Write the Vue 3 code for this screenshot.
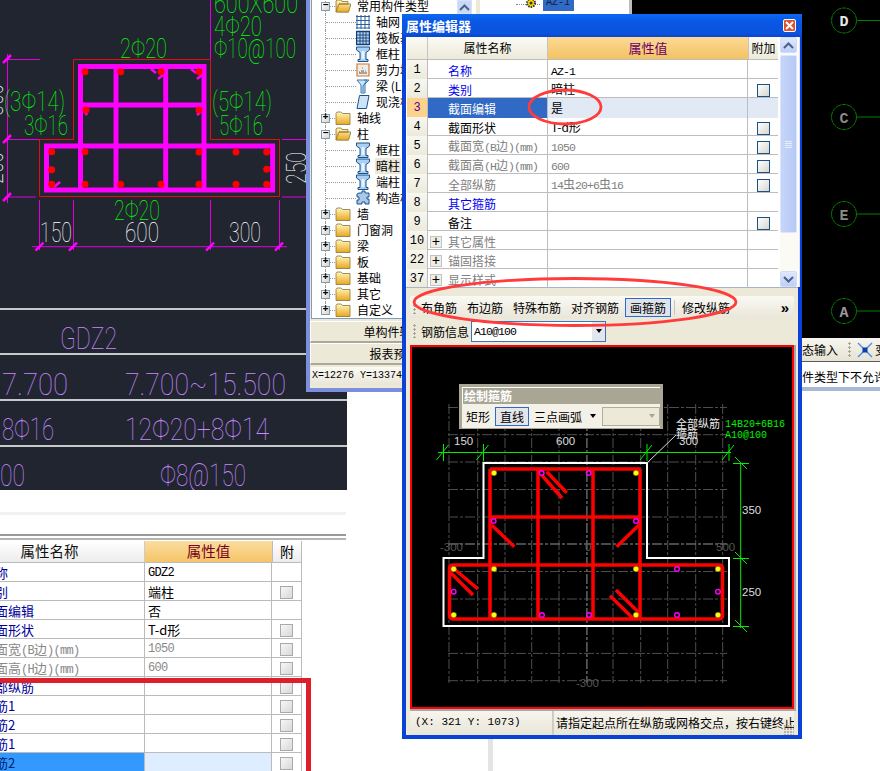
<script setup>
const leftTexts = [
  { t: '600X600', x: 214, y: 13, w: 84, c: 'g' },
  { t: '4Φ20', x: 214, y: 36, w: 48, c: 'g' },
  { t: 'Φ10@100', x: 214, y: 58, w: 82, c: 'g' },
  { t: '2Φ20', x: 120, y: 58, w: 47, c: 'g' },
  { t: '(3Φ14)', x: 4, y: 111, w: 61, c: 'g' },
  { t: '3Φ16', x: 24, y: 135, w: 44, c: 'g' },
  { t: '(5Φ14)', x: 212, y: 111, w: 60, c: 'g' },
  { t: '5Φ16', x: 219, y: 135, w: 44, c: 'g' },
  { t: '2Φ20', x: 114, y: 220, w: 46, c: 'g' },
  { t: '150', x: 40, y: 242, w: 32, c: 'w' },
  { t: '600', x: 125, y: 242, w: 34, c: 'w' },
  { t: '300', x: 229, y: 242, w: 32, c: 'w' },
  { t: 'GDZ2', x: 60, y: 349, w: 57, c: 'p' },
  { t: '7.700', x: 2, y: 395, w: 66, c: 'p' },
  { t: '7.700~15.500', x: 125, y: 395, w: 161, c: 'p' },
  { t: '8Φ16', x: 2, y: 440, w: 52, c: 'p' },
  { t: '12Φ20+8Φ14', x: 125, y: 440, w: 144, c: 'p' },
  { t: '00', x: 0, y: 486, w: 25, c: 'p' },
  { t: 'Φ8@150', x: 160, y: 486, w: 86, c: 'p' }
]
const stirrups = [
  [78, 66.5, 206, 66.5], [80.5, 64, 80.5, 192], [116, 66, 116, 190], [165.7, 66, 165.7, 190], [204, 64, 204, 192],
  [80, 105, 204, 105], [44, 146, 275, 146], [44, 190, 275, 190], [46.5, 144, 46.5, 192], [272.6, 144, 272.6, 192]
]
const leftDots = [
  [85, 71.7], [120.6, 71.7], [161, 71.7], [199, 71.7], [86, 110], [199, 110],
  [51.7, 151.7], [85, 151.7], [199, 152], [236, 152], [266.7, 152], [51.7, 169.7], [266.7, 169.3],
  [51.7, 184.3], [85, 184.3], [120.6, 184.3], [161, 184.3], [199, 184.3], [236, 184.3], [266.7, 184.3]
]
const leftHooks = [
  [151, 69, 156, 73], [158, 79, 164, 74], [191, 69, 196, 73], [197, 79, 203, 74],
  [83, 109, 87, 115], [197, 115, 203, 110], [54, 187, 60, 182]
]
const leftSlashes = [
  [7, 59], [7, 139], [7, 197], [39.5, 246.7], [73, 246.7], [210, 246.7], [279, 246.7]
]
const axes = [
  { k: 'D', y: 20.5, c: '#e8e8e8' }, { k: 'C', y: 117, c: '#8a8a8a' },
  { k: 'E', y: 214, c: '#8a8a8a' }, { k: 'A', y: 311, c: '#9a9a9a' }
]
const treeRows = [
  { t: '常用构件类型', kind: 'open' },
  { t: '轴网', kind: 'leaf', i: 'grid' },
  { t: '筏板基础', kind: 'leaf', i: 'raft' },
  { t: '框柱', kind: 'leaf', i: 'col' },
  { t: '剪力墙', kind: 'leaf', i: 'wall' },
  { t: '梁 (L)', kind: 'leaf', i: 'beam' },
  { t: '现浇板', kind: 'leaf', i: 'slab' },
  { t: '轴线', kind: 'closed' },
  { t: '柱', kind: 'open' },
  { t: '框柱', kind: 'leaf', i: 'col' },
  { t: '暗柱', kind: 'leaf', i: 'col', sel: true },
  { t: '端柱', kind: 'leaf', i: 'col' },
  { t: '构造柱', kind: 'leaf', i: 'gear' },
  { t: '墙', kind: 'closed' },
  { t: '门窗洞', kind: 'closed' },
  { t: '梁', kind: 'closed' },
  { t: '板', kind: 'closed' },
  { t: '基础', kind: 'closed' },
  { t: '其它', kind: 'closed' },
  { t: '自定义', kind: 'closed' }
]
const propRows = [
  { n: '1', name: '名称', tone: 'link', val: 'AZ-1', latin: true },
  { n: '2', name: '类别', tone: 'link', val: '暗柱', check: true },
  { n: '3', name: '截面编辑', tone: 'sel', val: '是', sel: true },
  { n: '4', name: '截面形状', val: 'T-d形', check: true },
  { n: '5', name: '截面宽', suffix: '(B', cjk: '边', tail: ')(mm)', tone: 'dim', val: '1050', latin: true, dim: true, check: true },
  { n: '6', name: '截面高', suffix: '(H', cjk: '边', tail: ')(mm)', tone: 'dim', val: '600', latin: true, dim: true, check: true },
  { n: '7', name: '全部纵筋', tone: 'dim', rebar: true, dim: true, check: true },
  { n: '8', name: '其它箍筋', tone: 'link', val: '' },
  { n: '9', name: '备注', val: '', check: true },
  { n: '10', name: '其它属性', tone: 'dim', val: '', plus: true },
  { n: '22', name: '锚固搭接', tone: 'dim', val: '', plus: true },
  { n: '37', name: '显示样式', tone: 'dim', val: '', plus: true }
]
const xGrid = [449, 477.7, 505, 531.7, 559, 586.7, 613, 640.7, 667.7, 695.7, 722.7]
const yGrid = [407.5, 434.7, 462, 489.5, 517, 544, 571.5, 599, 626, 653.4, 680.7]
const hookLines = [
  [541.7, 475, 562, 498], [546.7, 471.7, 566.7, 492.7], [491.7, 525, 514.3, 546.7], [640, 524, 616.7, 546.7],
  [453, 568, 478, 589], [450.7, 572.7, 473, 595], [616, 590, 639, 612.7], [610, 595.7, 632.7, 618]
]
const yellowDots = [
  [494, 473], [636, 473], [453.7, 569], [494, 569], [636, 569], [718, 569],
  [453.7, 615], [494, 615], [636, 615], [718, 615]
]
const magentaDots = [
  [541.7, 473], [588.7, 473], [493.7, 521], [636, 521], [677, 569], [453.7, 591.7], [718, 591.7],
  [542, 615], [589, 615], [677, 615]
]
const dimX = [443.5, 483.5, 647, 729]
const dimY = [463, 558, 626]
const gridLabels = [
  { t: '-300', x: 440, y: 551 }, { t: '0', x: 585, y: 551 }, { t: '500', x: 716, y: 551 }, { t: '-300', x: 576, y: 687 }
]
const dimLabels = [
  { t: '150', x: 454, y: 445 }, { t: '600', x: 556, y: 445 }, { t: '300', x: 679, y: 445 },
  { t: '350', x: 742, y: 514 }, { t: '250', x: 742, y: 596 }
]
const sideRows = [
  { name: '名称', val: 'GDZ2', latin: true },
  { name: '类别', val: '端柱', check: true },
  { name: '截面编辑', val: '否' },
  { name: '截面形状', val: 'T-d形', check: true },
  { name: '截面宽', suffix: '(B', cjk: '边', tail: ')(mm)', val: '1050', latin: true, dim: true, check: true },
  { name: '截面高', suffix: '(H', cjk: '边', tail: ')(mm)', val: '600', latin: true, dim: true, check: true },
  { name: '全部纵筋', val: '', check: true },
  { name: '角筋1', val: '', check: true },
  { name: '角筋2', val: '', check: true },
  { name: '边筋1', val: '', check: true },
  { name: '边筋2', val: '', check: true, sel: true }
]
</script>

<template>
  <div class="screen">
    <svg class="defs" width="0" height="0" aria-hidden="true">
      <defs>
        <linearGradient id="fold" x1="0" y1="0" x2="0" y2="1">
          <stop offset="0" stop-color="#fff6c4" />
          <stop offset="1" stop-color="#e7a81c" />
        </linearGradient>
        <symbol id="i-closed" viewBox="0 0 16 14">
          <path d="M1 2.500 2 1h4l1.500 1.500H15v11H1z" fill="url(#fold)" stroke="#8a7436" stroke-width=".8" />
        </symbol>
        <symbol id="i-open" viewBox="0 0 16 14">
          <path d="M1 13V2l1-1h4l1 1.500h6V5H4L1 13l3 .2h9.500L16 5H4" fill="url(#fold)" stroke="#8a7436" stroke-width=".8" />
        </symbol>
        <symbol id="i-col" viewBox="0 0 14 16">
          <path d="M.5 1h13v3l-3.500 2.500v7h2v2H2v-2h2v-7L.5 4z" fill="#a9d0f2" stroke="#19548f" />
          <path d="M5.500 5h3v8h-3z" fill="#e8f3fc" />
        </symbol>
        <symbol id="i-grid" viewBox="0 0 14 16">
          <path d="M1 1v14M5 1v14M9 1v14M13 1v14M0 2.500h14M0 6.500h14M0 10.500h14M0 14h14" fill="none" stroke="#2c5f9f" />
        </symbol>
        <symbol id="i-raft" viewBox="0 0 14 16">
          <path d="M.5 1.500h13v13H.5z" fill="#b8d3ef" stroke="#123f78" stroke-width="1.400" />
          <path d="M4 1v14M7 1v14M10 1v14M1 5h12M1 8h12M1 11h12" stroke="#123f78" stroke-width=".9" />
        </symbol>
        <symbol id="i-wall" viewBox="0 0 14 16">
          <path d="M1 2h12v12H1z" fill="#f1ece4" stroke="#d07a3c" stroke-width="1.200" />
          <path d="M3 12h8v-2H8V8H5v2H3z" fill="#a9a39a" />
          <path d="M3 10h1M6 6h1M9 9h1" stroke="#777" />
        </symbol>
        <symbol id="i-beam" viewBox="0 0 14 16">
          <path d="M1 2h12L9 6v9H5V7z" fill="#cfe4f7" stroke="#3a78b4" />
          <path d="M8 2l3 0-4 6v6" fill="none" stroke="#3a78b4" />
        </symbol>
        <symbol id="i-slab" viewBox="0 0 14 16">
          <path d="M3.500 1.500H13L10.500 14.500H1z" fill="#cfe3f7" stroke="#19548f" />
        </symbol>
        <symbol id="i-gear" viewBox="0 0 14 16">
          <path d="M3 3h3V1h3v2h4v4h-2v2h2v5H9v-2H6v2H1v-4h2V7H1V4z" fill="#a9c8e8" stroke="#19548f" />
        </symbol>
      </defs>
    </svg>

    <svg class="cad-left" width="347" height="490" viewBox="0 0 347 490">
      <rect width="347" height="490" fill="#20252f" />
      <g stroke="#fff" stroke-width="1.500">
        <line x1="0" y1="309" x2="347" y2="309" />
        <line x1="0" y1="354" x2="347" y2="354" />
        <line x1="0" y1="400" x2="347" y2="400" />
        <line x1="0" y1="446" x2="347" y2="446" />
      </g>
      <g stroke="#e000e0" fill="none">
        <path d="M210.500 0V59M7.500 54V203M7 59.500H40M5 139.500H73M5 197H36M282 139.500H306M282 197H306" />
        <path d="M32 246.700H287M39.500 200V250M73.500 200V250M210.500 200V250M279.500 200V250" />
      </g>
      <path d="M73.500 59.500H210.500V139.500H279.500V196.500H39.500V139.500H73.500Z" fill="none" stroke="#e01010" />
      <g stroke="#ff00ff" stroke-width="5">
        <line v-for="(s, i) in stirrups" :key="i" :x1="s[0]" :y1="s[1]" :x2="s[2]" :y2="s[3]" />
      </g>
      <g stroke="#ff00ff" stroke-width="2.500">
        <line v-for="(s, i) in leftHooks" :key="i" :x1="s[0]" :y1="s[1]" :x2="s[2]" :y2="s[3]" />
        <line v-for="(s, i) in leftSlashes" :key="'s' + i" :x1="s[0] - 4" :y1="s[1] + 4" :x2="s[0] + 4" :y2="s[1] - 4" />
      </g>
      <circle v-for="(d, i) in leftDots" :key="i" :cx="d[0]" :cy="d[1]" r="3.500" fill="#ff0000" />
      <g class="cad-text">
        <text
          v-for="(l, i) in leftTexts"
          :key="i"
          :class="l.c === 'p' ? 'purple' : l.c === 'w' ? 'white' : 'green'"
          :x="l.x"
          :y="l.y"
          :textLength="l.w"
          lengthAdjust="spacingAndGlyphs"
        >{{ l.t }}</text>
        <text class="white" transform="translate(306 184) rotate(-90)" textLength="32" lengthAdjust="spacingAndGlyphs">250</text>
        <text class="white" transform="translate(3 184) rotate(-90)" textLength="32" lengthAdjust="spacingAndGlyphs">250</text>
        <text class="white" transform="translate(3 116) rotate(-90)" textLength="32" lengthAdjust="spacingAndGlyphs">350</text>
      </g>
    </svg>

    <section class="side-props">
      <div class="side-band"></div>
      <div class="side-rule"></div>
      <div class="side-grid side-head">
        <div class="sh-name">属性名称</div>
        <div class="sh-val">属性值</div>
        <div class="sh-att">附</div>
      </div>
      <div v-for="(r, i) in sideRows" :key="i" class="side-grid side-row">
        <div class="s-name" :class="{ 's-sel': r.sel, 's-dim': r.dim }">
          <span class="s-name-in">{{ r.name }}<template v-if="r.suffix"><span class="latin-s">{{ r.suffix }}</span>{{ r.cjk }}<span class="latin-s">{{ r.tail }}</span></template></span>
        </div>
        <div class="s-val" :class="{ 's-val-sel': r.sel, 's-dim': r.dim, 'latin-s': r.latin }">{{ r.val }}</div>
        <div class="s-att"><span v-if="r.check" class="s-check"></span></div>
      </div>
    </section>
    <div class="side-mark"></div>
    <div class="bottom-scrap"></div>

    <section class="az-panel">
      <span class="az-branch"></span>
      <svg class="az-gear" width="12" height="12" viewBox="0 0 12 12">
        <circle cx="6" cy="6" r="4" fill="#ffd800" stroke="#333" stroke-dasharray="1.500 1" stroke-width="2" />
        <circle cx="6" cy="6" r="1.500" fill="#333" />
      </svg>
      <span class="az-label">AZ-1</span>
    </section>

    <svg class="cad-right" width="248" height="338" viewBox="632 0 248 338">
      <rect x="632" width="248" height="338" fill="#000" />
      <g v-for="a in axes" :key="a.k">
        <circle cx="844" :cy="a.y" r="12.500" fill="none" stroke="#008000" stroke-dasharray="5 .6" />
        <line x1="857" :y1="a.y" x2="880" :y2="a.y" stroke="#008000" />
        <text class="axis-letter" x="844" :y="a.y + 5.500" :fill="a.c">{{ a.k }}</text>
      </g>
    </svg>
    <div class="right-bar">
      <span class="rb-text">态输入</span>
      <span class="grip"></span>
      <svg width="16" height="16" viewBox="0 0 16 16">
        <path d="M1 1 15 15M15 1 1 15" stroke="#3b8fe0" fill="none" stroke-width="1.300" />
        <rect x="5.500" y="5.500" width="5" height="5" fill="#0a3fa8" />
      </svg>
      <span class="rb-text">变</span>
    </div>
    <div class="right-msg">件类型下不允许</div>

    <section class="tree-window">
      <div class="tree">
        <div class="tree-list">
          <div v-for="(r, i) in treeRows" :key="i" class="tree-row" :class="'k-' + r.kind">
            <span class="vline" :class="{ 'v-half': i === treeRows.length - 1 }"></span>
            <template v-if="r.kind !== 'leaf'">
              <span class="expander">{{ r.kind === 'open' ? '−' : '+' }}</span>
              <span class="hdots short"></span>
              <svg class="folder" width="16" height="14"><use :href="r.kind === 'open' ? '#i-open' : '#i-closed'" /></svg>
            </template>
            <template v-else>
              <span class="hdots long"></span>
              <svg class="leaf" width="14" height="16"><use :href="'#i-' + r.i" /></svg>
            </template>
            <span class="tree-text" :class="{ 'tree-sel': r.sel }">{{ r.t }}</span>
          </div>
        </div>
        <div class="tree-scroll-up"><svg width="11" height="7" viewBox="0 0 11 7"><path d="M1 6 5.500 1.500 10 6" fill="none" stroke="#4d6185" stroke-width="2" /></svg></div>
      </div>
      <button class="tree-btn">单构件输入</button>
      <button class="tree-btn">报表预览</button>
      <div class="tree-status">X=12276 Y=13374</div>
    </section>

    <section class="dialog">
      <header class="dlg-title">
        <span>属性编辑器</span>
        <span class="dlg-close"><svg width="9" height="9" viewBox="0 0 9 9"><path d="M1 1 8 8M8 1 1 8" stroke="#fff" stroke-width="2" /></svg></span>
      </header>
      <div class="dlg-top">
        <div class="prop-table">
          <div class="p-row p-head">
            <div class="ph-blank"></div>
            <div class="ph-name">属性名称</div>
            <div class="ph-val">属性值</div>
            <div class="ph-att">附加</div>
          </div>
          <div v-for="r in propRows" :key="r.n" class="p-row">
            <div class="p-num" :class="{ 'num-sel': r.sel }">{{ r.n }}</div>
            <div class="p-name" :class="'tone-' + (r.tone || 'plain')">
              <span v-if="r.plus" class="plus-box">+</span>
              <span class="name-text">{{ r.name }}<template v-if="r.suffix"><span class="latin">{{ r.suffix }}</span>{{ r.cjk }}<span class="latin">{{ r.tail }}</span></template></span>
            </div>
            <div class="p-val" :class="{ 'val-sel': r.sel, 'val-dim': r.dim }">
              <template v-if="r.rebar"><span class="latin">14</span>虫<span class="latin">20+6</span>虫<span class="latin">16</span></template>
              <span v-else :class="{ latin: r.latin }">{{ r.val }}</span>
            </div>
            <div class="p-att" :class="{ 'val-sel': r.sel }"><span v-if="r.check" class="check"></span></div>
          </div>
        </div>
        <div class="scrollbar">
          <div class="sb-btn"><svg width="11" height="7" viewBox="0 0 11 7"><path d="M1 6 5.500 1.500 10 6" fill="none" stroke="#4d6185" stroke-width="2" /></svg></div>
          <div class="sb-thumb"><span></span><span></span><span></span><span></span></div>
          <div class="sb-track"></div>
          <div class="sb-btn"><svg width="11" height="7" viewBox="0 0 11 7"><path d="M1 1 5.500 5.500 10 1" fill="none" stroke="#4d6185" stroke-width="2" /></svg></div>
        </div>
      </div>

      <div class="dlg-lower">
        <div class="toolbar tb-one">
          <span class="grip"></span>
          <span class="tb-item">布角筋</span>
          <span class="tb-item">布边筋</span>
          <span class="tb-item">特殊布筋</span>
          <span class="tb-item">对齐钢筋</span>
          <span class="tb-item tb-active">画箍筋</span>
          <span class="tb-sep"></span>
          <span class="tb-item tb-last">修改纵筋</span>
          <span class="tb-more">»</span>
        </div>
        <div class="toolbar tb-two">
          <span class="grip"></span>
          <span class="tb-label">钢筋信息</span>
          <div class="combo">
            <span class="combo-text">A10@100</span>
            <span class="combo-arrow"><i></i></span>
          </div>
        </div>

        <div class="canvas-wrap">
          <svg class="canvas" width="384" height="364" viewBox="410 345 384 364">
            <rect x="411" y="346" width="382" height="362" fill="#000" stroke="#ff0000" stroke-width="2" />
            <g stroke="#4e4e4e" stroke-dasharray="10 2 3 2" fill="none">
              <line v-for="x in xGrid" :key="x" :x1="x" y1="404" :x2="x" y2="683" />
              <line v-for="y in yGrid" :key="y" x1="448" :y1="y" x2="727" :y2="y" />
            </g>
            <line x1="587" y1="404" x2="587" y2="683" stroke="#6e6e6e" stroke-dasharray="10 2 3 2" />
            <line x1="448" y1="544" x2="727" y2="544" stroke="#6e6e6e" stroke-dasharray="10 2 3 2" />
            <text v-for="(g, i) in gridLabels" :key="i" class="grid-label" :x="g.x" :y="g.y">{{ g.t }}</text>

            <path d="M483.500 463H647V558H729V626H443.500V558H483.500Z" fill="none" stroke="#fff" stroke-width="2" />
            <g stroke="#ff0000" stroke-width="3.500" fill="none">
              <path d="M490 469H640M490 517H640M490 469V619M538 469V619M593 469V619M640 469V619" />
              <rect x="449.500" y="565" width="273" height="54" rx="3" />
              <line v-for="(h, i) in hookLines" :key="i" :x1="h[0]" :y1="h[1]" :x2="h[2]" :y2="h[3]" />
            </g>
            <circle v-for="(d, i) in yellowDots" :key="i" :cx="d[0]" :cy="d[1]" r="2.800" fill="#ffff00" stroke="#555" stroke-width=".5" />
            <circle v-for="(d, i) in magentaDots" :key="'m' + i" :cx="d[0]" :cy="d[1]" r="2.300" fill="none" stroke="#ff00ff" stroke-width="1.400" />

            <g stroke="#00ee00" fill="none">
              <path d="M438 452.500H731M740.700 463V628M733 463.500H749M733 558.500H749M733 626.500H749" />
              <line v-for="x in dimX" :key="x" :x1="x" y1="444" :x2="x" y2="461" />
              <line v-for="x in dimX" :key="'d' + x" :x1="x - 7" y1="460" :x2="x + 5" y2="445" />
              <line v-for="y in dimY" :key="y" x1="735" :y1="y - 6" x2="747" :y2="y + 6" />
            </g>
            <text v-for="(d, i) in dimLabels" :key="i" class="dim-label" :x="d.x" :y="d.y">{{ d.t }}</text>
            <line x1="647" y1="463" x2="676" y2="435" stroke="#ddd" />
            <text class="note-white" x="676" y="428">全部纵筋</text>
            <text class="note-white" x="676" y="438">箍筋</text>
            <text class="note-green" x="725" y="427">14B20+6B16</text>
            <text class="note-green" x="725" y="438">A10@100</text>
          </svg>

          <div class="float-tool">
            <div class="ft-title">绘制箍筋</div>
            <div class="ft-body">
              <span class="ft-item">矩形</span>
              <span class="ft-item ft-on">直线</span>
              <span class="ft-item">三点画弧</span>
              <i class="ft-arrow"></i>
              <div class="ft-combo"><i></i></div>
            </div>
          </div>
        </div>

        <footer class="dlg-status">
          <div class="ds-left">(X: 321 Y: 1073)</div>
          <div class="ds-right">请指定起点所在纵筋或网格交点，按右键终止操作</div>
          <span class="resize-grip"></span>
        </footer>
      </div>
    </section>

    <svg class="marks" width="880" height="771" viewBox="0 0 880 771" aria-hidden="true">
      <ellipse cx="565" cy="107" rx="36" ry="17" fill="none" stroke="#ff3b3b" stroke-width="2.800" />
      <ellipse cx="575" cy="302" rx="161" ry="23.500" fill="none" stroke="#ff3b3b" stroke-width="2.800" />
    </svg>
  </div>
</template>

<style>
html, body { background: #fff; }
</style>

<style scoped>
.screen {
  position: relative;
  width: 880px;
  height: 771px;
  overflow: hidden;
  background: #fff;
  font-family: "Noto Sans CJK SC", "Liberation Sans", sans-serif;
  font-size: 12px;
  color: #000;
}
.defs { position: absolute; }

/* left cad window */
.cad-left { position: absolute; left: 0; top: 0; }
.cad-text text { font-family: Roboto, "Liberation Sans", sans-serif; font-weight: 100; font-size: 27px; }
.green { fill: #00ff00; }
.white { fill: #ffffff; }
.cad-text .purple { fill: #c888ff; font-size: 32px; }

/* lower left property sheet */
.side-props { position: absolute; left: 0; top: 490px; width: 402px; height: 281px; overflow: hidden; }
.side-band { width: 346px; height: 3px; margin-top: 22px; background: #f1f1f1; }
.side-rule { box-sizing: border-box; width: 346px; height: 6px; margin-top: 19px; margin-bottom: 1px; border-top: 2px solid #999; border-bottom: 2px solid #b4b4b4; }
.side-grid { display: grid; grid-template-columns: 145px 127px 30px; width: 302px; }
.side-head { height: 22px; line-height: 20px; font-size: 14px; text-align: center; border-bottom: 1px solid #bbb; box-sizing: border-box; }
.sh-name { background: linear-gradient(#fff, #ececec); border-right: 1px solid #ccc; padding-right: 45px; color: #111; font-size: 14.500px; }
.sh-val { background: linear-gradient(#fadd9f, #f5c467); color: #7b0020; font-size: 14.500px; }
.sh-att { background: linear-gradient(#fff, #ececec); border-right: 1px solid #bbb; border-left: 1px solid #bbb; }
.side-row { height: 19px; box-sizing: border-box; border-bottom: 1px solid #bbb; line-height: 20px; }
.s-name { color: #000099; font-size: 13px; white-space: nowrap; overflow: hidden; border-right: 1px solid #bbb; }
.s-name-in { display: block; margin-left: -18px; }
.s-val { font-size: 13px; padding-left: 3px; border-right: 1px solid #bbb; overflow: hidden; }
.s-att { display: flex; align-items: center; justify-content: center; padding-top: 2px; border-right: 1px solid #bbb; }
.s-sel { background: #3399ff; color: #00206a; }
.s-val-sel { background: #deedff; }
.s-dim { color: #888; }
.latin-s { font-family: "Liberation Mono", monospace; font-size: 12px; letter-spacing: -.7px; }
.s-check { width: 13px; height: 13px; border: 1px solid #aaa; background: linear-gradient(135deg, #f7f7f7, #d8d8d8); box-sizing: border-box; }
.side-mark { position: absolute; left: -6px; top: 678px; width: 317px; height: 100px; border: 5px solid #dc1f2b; box-sizing: border-box; }
.bottom-scrap { position: absolute; left: 488px; top: 739px; width: 5px; height: 32px; background: #e4e4e4; }

/* panel behind the dialog */
.az-panel { position: absolute; left: 476px; top: 0; width: 156px; height: 14px; box-sizing: border-box; background: #fff; border-left: 4px solid #d7d7d7; border-right: 3px solid #bdbdbd; overflow: hidden; }
.az-branch { position: absolute; left: 36px; top: 4px; width: 24px; border-top: 1px dotted #888; }
.az-gear { position: absolute; left: 45px; top: -3px; }
.az-label { position: absolute; left: 63px; top: -3px; width: 31px; height: 14px; padding-left: 3px; box-sizing: border-box; background: #316ac5; color: #0c1c3a; font: 10px/12px "Liberation Mono", monospace; }

/* right cad window */
.cad-right { position: absolute; left: 632px; top: 0; }
.axis-letter { font: bold 15px "Liberation Mono", monospace; text-anchor: middle; }
.right-bar { position: absolute; left: 802px; top: 338px; width: 78px; height: 24px; display: flex; align-items: center; background: linear-gradient(#f7f5ee, #e6e3d3); box-sizing: border-box; border-bottom: 1px solid #5c5c5c; white-space: nowrap; overflow: hidden; }
.rb-text { flex: none; }
.right-bar .grip { margin: 0 6px 0 10px; height: 16px; }
.right-bar svg { flex: none; margin-right: 2px; }
.right-msg { position: absolute; left: 802px; top: 362px; width: 78px; height: 29px; box-sizing: border-box; padding-top: 6px; line-height: 18px; background: #fff; border-bottom: 4px solid #a9b8d4; white-space: nowrap; overflow: hidden; }

/* tree window */
.tree-window { position: absolute; left: 306px; top: 0; width: 174px; height: 392px; box-sizing: border-box; border: 4px solid #7b8fdc; border-top: 0; border-right: 0; background: #ece9d8; display: flex; flex-direction: column; padding: 0 4px 6px 1px; }
.tree { position: relative; height: 318px; flex: none; background: #fff; border-left: 1px solid #7f9db9; border-bottom: 1px solid #7f9db9; overflow: hidden; }
.tree-list { margin-top: -2px; }
.tree-row { position: relative; height: 16px; display: flex; align-items: center; white-space: nowrap; }
.vline { position: absolute; left: 13px; top: 0; bottom: 0; border-left: 1px dotted #999; }
.v-half { bottom: 8px; }
.expander { position: relative; margin-left: 9px; width: 9px; height: 9px; flex: none; box-sizing: border-box; border: 1px solid #7f9db9; background: linear-gradient(135deg, #fff, #d8d5c8); font: bold 10px/6px "Liberation Mono", monospace; text-align: center; color: #000; }
.hdots { flex: none; border-top: 1px dotted #999; }
.hdots.short { width: 5px; }
.hdots.long { width: 30px; margin-left: 14px; }
.folder { flex: none; margin-right: 5px; }
.leaf { flex: none; margin-left: 0; margin-right: 5px; }
.k-open .folder { margin-left: 0; }
.tree-text { padding: 0 1px; line-height: 16px; }
.tree-sel { background: #ece9d8; }
.tree-scroll-up { position: absolute; left: 145px; top: 0; width: 15px; height: 14px; display: flex; align-items: center; justify-content: center; background: #c9d8f8; border: 1px solid #d9e3f6; box-sizing: border-box; }
.tree-btn { flex: none; height: 22px; margin: 2px 0 0 -1px; padding: 0; font: inherit; background: #ece9d8; border: 0; border-top: 1px solid #fff; border-bottom: 2px solid #aca899; border-left: 1px solid #fff; color: #000; }
.tree-btn + .tree-btn { margin-top: 0; }
.tree-status { flex: 1; margin-top: 2px; padding-left: 1px; line-height: 18px; font: 10px/18px "Liberation Mono", monospace; background: linear-gradient(#faf9f3, #e9e6d8); white-space: nowrap; }

/* dialog */
.dialog { position: absolute; left: 402px; top: 14px; width: 400px; height: 725px; box-sizing: border-box; border: 4px solid #0a42d8; border-top: 0; background: #ece9d8; display: flex; flex-direction: column; }
.dlg-title { flex: none; height: 23px; margin: 0 -4px; padding: 0 6px 0 4px; display: flex; align-items: center; justify-content: space-between; background: linear-gradient(#0a6af2, #0a58e4 30%, #0b52de 85%, #0a46c8); color: #fff; font-weight: 700; font-size: 13px; }
.dlg-close { width: 13px; height: 13px; display: flex; align-items: center; justify-content: center; background: #e0522c; border: 1px solid #fff; border-radius: 2px; box-sizing: border-box; }
.dlg-top { flex: none; height: 251px; display: flex; background: #fff; padding-left: 1px; box-sizing: border-box; border-bottom: 1px solid #a8b4c8; }
.prop-table { width: 371px; flex: none; overflow: hidden; }
.p-row { display: grid; grid-template-columns: 21px 120px 200px 30px; height: 19px; box-sizing: border-box; border-bottom: 1px solid #bdbdbd; line-height: 20px; }
.p-head { height: 23px; line-height: 22px; }
.ph-blank, .ph-name, .ph-att { background: linear-gradient(#fbfaf5, #ecead9); }
.ph-blank { border-right: 1px solid #c4c4c4; }
.ph-name { text-align: center; border-right: 1px solid #c4c4c4; }
.ph-val { text-align: center; color: #6b006b; background: linear-gradient(#fbd996, #f3c263); font-size: 13px; }
.ph-att { text-align: center; border-left: 1px solid #c4c4c4; }
.p-num { text-align: center; background: linear-gradient(#f8f7f0, #ebe9da); border-right: 1px solid #bdbdbd; font: 12px/20px "Liberation Mono", monospace; }
.num-sel { background: #fbd38c; color: #5a0090; }
.p-name { display: flex; align-items: center; border-right: 1px solid #bdbdbd; white-space: nowrap; overflow: hidden; padding: 2px 0 0 20px; }
.name-text { line-height: 18px; }
.plus-box { width: 12px; height: 12px; margin-left: -18px; margin-right: 6px; box-sizing: border-box; border: 1px solid #c4c4c4; background: #f0eee2; color: #000; font: 14px/10px "Liberation Mono", monospace; text-align: center; flex: none; }
.tone-link { color: #0000f0; }
.tone-dim { color: #808080; }
.tone-sel { background: #316ac5; color: #fff; }
.tone-plain { color: #000; }
.p-val { padding-left: 3px; border-right: 1px solid #bdbdbd; white-space: nowrap; overflow: hidden; }
.val-dim { color: #808080; }
.val-sel { background: #e1e9f5; }
.p-att { display: flex; align-items: center; justify-content: center; padding-top: 2px; }
.latin { font-family: "Liberation Mono", monospace; font-size: 11.500px; letter-spacing: -.9px; }
.check { width: 13px; height: 13px; box-sizing: border-box; border: 1px solid #1c5180; background: linear-gradient(135deg, #fff, #d6d6d0); }

.scrollbar { flex: none; width: 17px; margin-left: 2px; display: flex; flex-direction: column; background: #fbfaf4; border-right: 1px solid #dfe4ee; padding-right: 2px; }
.sb-btn { flex: none; height: 16px; display: flex; align-items: center; justify-content: center; background: linear-gradient(#e0e8fc, #bccefa); border: 1px solid #d2dcf3; box-sizing: border-box; border-radius: 2px; }
.sb-thumb { flex: none; height: 178px; margin-top: 2px; display: flex; flex-direction: column; align-items: center; justify-content: center; gap: 1px; background: linear-gradient(90deg, #c6d5fa, #b6c9f6); border: 1px solid #dde6fb; box-sizing: border-box; border-radius: 2px; }
.sb-thumb span { width: 7px; height: 1px; background: #e8eefc; }
.sb-track { flex: 1; }

.dlg-lower { flex: 1; min-height: 0; display: flex; flex-direction: column; padding: 8px 4px 0; }
.toolbar { flex: none; height: 22px; display: flex; align-items: center; white-space: nowrap; }
.tb-one { background: linear-gradient(#faf9f4, #e9e6d9); border-radius: 3px; padding-left: 3px; }
.tb-two { margin-top: 2px; padding-left: 3px; }
.grip { flex: none; width: 3px; height: 14px; margin-right: 5px; background: radial-gradient(circle at 1.500px 1.500px, #a9a693 1.200px, transparent 1.300px) 0 0 / 3px 4px; }
.tb-item { flex: none; margin-right: 10px; line-height: 17px; }
.tb-active { margin-left: -4px; margin-right: 0; padding: 0 4px; height: 17px; background: #dfe4ec; border: 1px solid #316ac5; box-sizing: content-box; line-height: 17px; }
.tb-sep { flex: none; width: 1px; height: 15px; margin: 0 7px 0 3px; background: #c9c6b5; }
.tb-more { margin-left: auto; margin-right: 5px; font: bold 15px/15px "Liberation Sans", sans-serif; }
.tb-label { flex: none; margin-right: 2px; }
.combo { flex: none; width: 135px; height: 21px; box-sizing: border-box; display: flex; align-items: center; justify-content: space-between; background: #fff; border: 1px solid #3b72b8; }
.combo-text { padding-left: 2px; font: 11.500px "Liberation Mono", monospace; letter-spacing: -.9px; }
.combo-arrow { width: 13px; height: 19px; display: flex; align-items: center; justify-content: center; background: #e3e6ea; }
.combo-arrow i { border: 3.500px solid transparent; border-top: 4px solid #000; border-bottom: 0; }

.canvas-wrap { position: relative; flex: none; height: 364px; margin-top: 3px; box-shadow: 1px 1px 0 1px #a8a8a8; }
.canvas { display: block; }
.grid-label { font: 11.500px "Liberation Sans", sans-serif; fill: #555; }
.dim-label { font: 11.500px "Liberation Sans", sans-serif; fill: #ddd; }
.note-white { font-size: 11px; fill: #e8e8e8; }
.note-green { font: 10px "Liberation Mono", monospace; fill: #00f000; }

.float-tool { position: absolute; left: 49px; top: 39px; width: 204px; height: 45px; box-sizing: border-box; background: #ece9d8; border: 3px solid #a9a696; }
.ft-title { height: 17px; line-height: 15px; padding-left: 1px; background: #a9a696; color: #fff; font-weight: 700; font-size: 12px; border-top: 1px solid #fff; border-left: 1px solid #fff; box-sizing: border-box; }
.ft-body { display: flex; align-items: center; height: 24px; padding-left: 4px; background: #f4f2e8; }
.ft-item { flex: none; line-height: 17px; margin-right: 5px; }
.ft-on { padding: 0 4px; margin: 0 5px 0 0; border: 1px solid #316ac5; background: #e3e6ea; }
.ft-arrow { flex: none; margin: 0 6px 0 3px; border: 3px solid transparent; border-top: 4px solid #000; border-bottom: 0; }
.ft-combo { flex: none; width: 58px; height: 19px; box-sizing: border-box; border: 1px solid #b0ad9b; background: #ece9d8; display: flex; align-items: center; justify-content: flex-end; padding-right: 4px; }
.ft-combo i { border: 3px solid transparent; border-top: 4px solid #a9a696; border-bottom: 0; }

.dlg-status { position: relative; flex: 1; min-height: 0; margin-top: 2px; display: flex; background: linear-gradient(#f7f5ee, #e8e5d8); overflow: hidden; }
.ds-left { flex: none; width: 144px; padding-left: 5px; box-sizing: border-box; font: 11px/23px "Liberation Mono", monospace; border-right: 2px solid #cfcdbd; }
.ds-right { padding-left: 2px; line-height: 23px; white-space: nowrap; overflow: hidden; }
.resize-grip { position: absolute; right: 0; bottom: 0; width: 10px; height: 10px; background: radial-gradient(circle at 1px 1px, #b5b2a0 1px, transparent 1.200px) 0 0 / 3px 3px; }

.marks { position: absolute; left: 0; top: 0; pointer-events: none; }
</style>
